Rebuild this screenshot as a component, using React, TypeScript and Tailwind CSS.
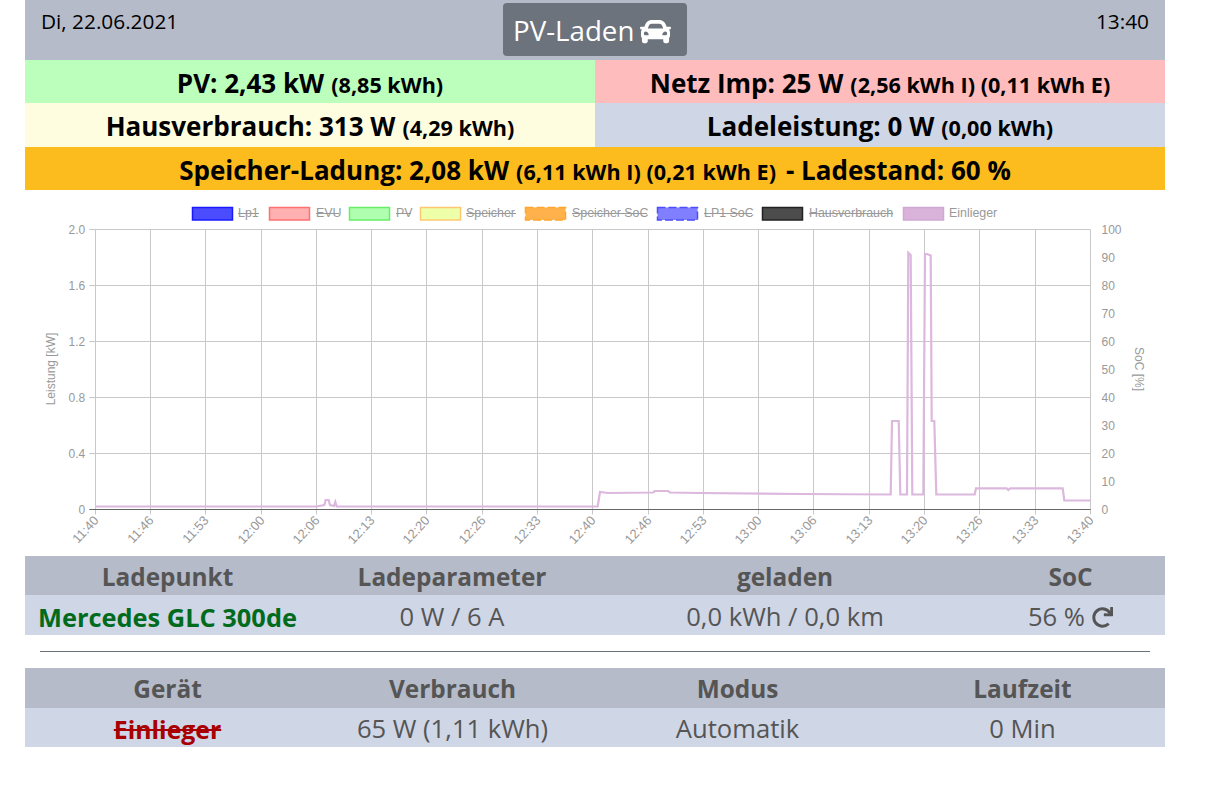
import { FaCar, FaRedo } from 'react-icons/fa';

const font = { sans: "font-['Open_Sans',sans-serif]" };

const xLabels = ['11:40', '11:46', '11:53', '12:00', '12:06', '12:13', '12:20', '12:26', '12:33', '12:40', '12:46', '12:53', '13:00', '13:06', '13:13', '13:20', '13:26', '13:33', '13:40'];
const leftTicks = ['2.0', '1.6', '1.2', '0.8', '0.4', '0'];
const rightTicks = ['100', '90', '80', '70', '60', '50', '40', '30', '20', '10', '0'];

const legend = [
  { box: 192, text: 238, width: 21, label: 'Lp1', fill: '#4c4cff', stroke: '#1a1aff', off: true },
  { box: 269, text: 316, width: 23, label: 'EVU', fill: '#ffb0b0', stroke: '#ff7070', off: true },
  { box: 349, text: 396, width: 15, label: 'PV', fill: '#b0ffb0', stroke: '#66ee66', off: true },
  { box: 420, text: 466, width: 50, label: 'Speicher', fill: '#eeffaa', stroke: '#ffc870', off: true },
  { box: 525, text: 572, width: 75, label: 'Speicher SoC', fill: '#ffb24c', stroke: '#ffa52a', off: true, dash: true },
  { box: 657, text: 704, width: 48, label: 'LP1 SoC', fill: '#7f7fff', stroke: '#4c4cff', off: true, dash: true },
  { box: 762, text: 809, width: 84, label: 'Hausverbrauch', fill: '#4c4c4c', stroke: '#222222', off: true },
  { box: 903, text: 949, width: 49, label: 'Einlieger', fill: '#d9b3d9', stroke: '#d0a8d4', off: false },
];

const linePoints =
  '95,506.5 316.7,506.5 324.3,505 325.7,500 328.7,500 330,505 334,506 335.3,502 336.7,506.5 597.7,506.5 600,492 608,493 653,492.5 655,491 668,491 670,492.5 700,493 800,494 890.7,494.5 892,421 898.7,421 900.3,494.5 907,494.5 908.3,252.7 910.7,255 912.3,494.5 923.3,494.5 925,254 927,254 930.7,255.5 931.7,421 934.3,421 936.3,494.5 974.7,494.5 976,488.3 1006.7,488.3 1008.3,490 1010.3,488.3 1062.7,488.3 1064.3,500.5 1090,500.5';

function PowerChart() {
  const plotLeft = 95.3;
  const plotRight = 1090.5;
  const plotTop = 229.5;
  const plotBottom = 509.5;
  const step = 55.28;

  return (
    <svg viewBox="25 190 1140 366" className="block h-[366px] w-[1140px]" fontFamily="'Liberation Sans', sans-serif" fontSize="12" fill="#999999">
      {/* legend */}
      {legend.map((item) => (
        <g key={item.label}>
          <rect x={item.box + 0.5} y={207.5} width={40} height={12.5} fill={item.fill} stroke={item.stroke} strokeWidth={1.5} strokeDasharray={item.dash ? '8 3' : undefined} />
          <text x={item.text} y={217} fontSize="12.4">{item.label}</text>
          {item.off && <rect x={item.text} y={213} width={item.width} height={1} fill="#999999" />}
        </g>
      ))}

      {/* grid */}
      {xLabels.map((label, i) => {
        const x = Math.floor(plotLeft + step * i) + 0.5;
        return (
          <g key={label}>
            <line x1={x} x2={x} y1={plotTop} y2={plotBottom + 5} stroke="#c8c8c8" />
            <text transform={`translate(${x + 4} 521) rotate(-47)`} textAnchor="end" fontSize="13">{label}</text>
          </g>
        );
      })}
      {leftTicks.map((label, i) => {
        const y = Math.round(plotTop + 56 * i) + 0.5 - 1;
        return (
          <g key={label}>
            <line x1={plotLeft - 6} x2={plotRight} y1={y} y2={y} stroke={label === '0' ? '#666666' : '#c8c8c8'} />
            <text x={plotLeft - 10} y={y + 4} textAnchor="end">{label}</text>
          </g>
        );
      })}
      {rightTicks.map((label, i) => (
        <text key={label} x={plotRight + 11} y={plotTop + 28 * i + 4}>{label}</text>
      ))}
      <text transform="translate(55 369) rotate(-90)" textAnchor="middle">Leistung [kW]</text>
      <text transform="translate(1135 369) rotate(90)" textAnchor="middle">SoC [%]</text>

      {/* Einlieger line */}
      <polyline points={linePoints} fill="none" stroke="#dcb8de" strokeWidth={2.2} strokeLinejoin="miter" />
    </svg>
  );
}

function StatRow({ bg, main, sub, extra }: { bg: string; main: string; sub: string; extra?: string }) {
  return (
    <div className={`flex items-center justify-center whitespace-nowrap pt-[2px] font-bold leading-none text-black ${bg}`}>
      <div className="flex items-baseline">
        <span className="text-[26px]">{main}</span>
        <span className="ml-[7px] text-[21.6px]">{sub}</span>
        {extra && <span className="ml-[10px] text-[26px]">{extra}</span>}
      </div>
    </div>
  );
}

export default function App() {
  return (
    <div className={`min-h-[796px] w-[1205px] bg-white pl-[25px] text-[#555555] ${font.sans}`}>
      <div className="w-[1140px]">
        {/* Header */}
        <div className="grid h-[60px] grid-cols-[1fr_184px_1fr] items-start bg-[#b5bbc9] px-[16px] text-[20.8px] text-black">
          <div className="mt-[6px]">Di, 22.06.2021</div>
          <div className="mt-[3px] flex h-[53px] items-center gap-[6px] rounded-[4px] bg-[#6c737c] pl-[10px] pt-[3px] text-[27.7px] text-white">
            PV-Laden <FaCar className="text-[31px]" />
          </div>
          <div className="mt-[6px] text-right">13:40</div>
        </div>

        {/* Power overview */}
        <div className="grid grid-cols-2 grid-rows-[43px_44px]">
          <StatRow bg="bg-[#bcffbc]" main="PV: 2,43 kW" sub="(8,85 kWh)" />
          <StatRow bg="bg-[#ffbcbc]" main="Netz Imp: 25 W" sub="(2,56 kWh I) (0,11 kWh E)" />
          <StatRow bg="bg-[#fefddf]" main="Hausverbrauch: 313 W" sub="(4,29 kWh)" />
          <StatRow bg="bg-[#cfd6e6]" main="Ladeleistung: 0 W" sub="(0,00 kWh)" />
        </div>
        <div className="grid h-[43px]">
          <StatRow bg="bg-[#fcbc1d]" main="Speicher-Ladung: 2,08 kW" sub="(6,11 kWh I) (0,21 kWh E)" extra="- Ladestand: 60 %" />
        </div>

        <PowerChart />

        {/* Ladepunkte */}
        <div className="grid h-[39px] grid-cols-[285px_284px_382px_189px] items-center bg-[#b5bbc9] pt-[3px] text-center text-[24.4px] font-bold">
          <div>Ladepunkt</div>
          <div>Ladeparameter</div>
          <div>geladen</div>
          <div>SoC</div>
        </div>
        <div className="grid h-[40px] grid-cols-[285px_284px_382px_189px] items-center bg-[#cfd6e6] pt-[3px] text-center text-[25.6px]">
          <div className="text-[25.4px] font-bold text-[#006b1c]">Mercedes GLC 300de</div>
          <div>0 W / 6 A</div>
          <div>0,0 kWh / 0,0 km</div>
          <div className="flex items-center justify-center gap-[7px]">
            56 % <FaRedo className="text-[21px]" />
          </div>
        </div>

        <hr className="mx-[15px] mb-[16px] mt-[16px] border-t border-[#6c737c]" />

        {/* Geräte */}
        <div className="grid h-[40px] grid-cols-4 items-center bg-[#b5bbc9] pt-[2px] text-center text-[24.4px] font-bold">
          <div>Gerät</div>
          <div>Verbrauch</div>
          <div>Modus</div>
          <div>Laufzeit</div>
        </div>
        <div className="grid h-[39px] grid-cols-4 items-center bg-[#cfd6e6] pt-[2px] text-center text-[25.6px]">
          <div className="text-[24.8px] font-bold text-[#a80000] line-through">Einlieger</div>
          <div>65 W (1,11 kWh)</div>
          <div>Automatik</div>
          <div>0 Min</div>
        </div>
      </div>
    </div>
  );
}
